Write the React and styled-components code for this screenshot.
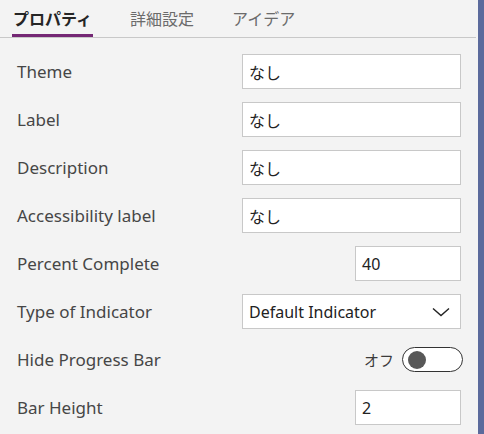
import React from 'react';
import styled, { createGlobalStyle } from 'styled-components';

const GlobalStyle = createGlobalStyle`
  html, body {
    margin: 0;
    padding: 0;
    background: #f3f3f3;
  }
  body {
    font-family: "Noto Sans", "Noto Sans CJK JP", sans-serif;
  }
`;

const Frame = styled.div`
  display: flex;
  width: 484px;
  height: 434px;
  overflow: hidden;
  background: #f3f3f3;
`;

const Panel = styled.div`
  width: 476px;
  padding-right: 2px;
  display: flex;
  flex-direction: column;
`;

const Edge = styled.div`
  width: 6px;
  background: #5b6a9c;
`;

const TabBar = styled.div`
  display: flex;
  height: 37px;
  padding-left: 12px;
  border-bottom: 1px solid #c8c8c8;
`;

const Tab = styled.div`
  position: relative;
  margin-right: 36px;
  padding: 6px 1px 0;
  font-size: 16px;
  font-weight: ${(p) => (p.$active ? 600 : 400)};
  color: ${(p) => (p.$active ? '#252525' : '#6b6b6b')};
  font-family: "Noto Sans CJK JP", sans-serif;
  &::after {
    content: '';
    display: ${(p) => (p.$active ? 'block' : 'none')};
    position: absolute;
    left: 0;
    right: 0;
    bottom: 0;
    height: 3px;
    background: #742774;
  }
`;

const List = styled.div`
  display: flex;
  flex-direction: column;
  gap: 13px;
  padding: 16px 15px 0 17px;
`;

const Row = styled.div`
  display: grid;
  grid-template-columns: 225px 1fr;
  align-items: center;
  height: 35px;
`;

const Label = styled.div`
  font-size: 17px;
  color: #464646;
`;

const Field = styled.div`
  display: flex;
  justify-content: flex-end;
  align-items: center;
  gap: 8px;
`;

const Input = styled.div`
  box-sizing: border-box;
  width: ${(p) => p.$width || '100%'};
  height: 35px;
  display: flex;
  align-items: center;
  justify-content: space-between;
  padding: 0 10px 0 6px;
  background: #fff;
  border: 1px solid #c8c8c8;
  font-size: 16px;
  color: #222;
  font-family: "Noto Sans", "Noto Sans CJK JP", sans-serif;
`;

const ToggleText = styled.span`
  font-size: 15px;
  color: #3b3b3b;
  font-family: "Noto Sans CJK JP", sans-serif;
`;

const Toggle = styled.div`
  box-sizing: border-box;
  width: 61px;
  height: 25px;
  margin-right: -2px;
  border: 1px solid #333;
  border-radius: 13px;
  background: #fff;
  display: flex;
  align-items: center;
  padding-left: 5px;
`;

const Knob = styled.div`
  width: 18px;
  height: 18px;
  border-radius: 50%;
  background: #585858;
`;

const textRows = ['Theme', 'Label', 'Description', 'Accessibility label'];

export default function App() {
  return (
    <Frame>
      <GlobalStyle />
      <Panel>
        <TabBar>
          <Tab $active>プロパティ</Tab>
          <Tab>詳細設定</Tab>
          <Tab>アイデア</Tab>
        </TabBar>
        <List>
          {textRows.map((name) => (
            <Row key={name}>
              <Label>{name}</Label>
              <Input>なし</Input>
            </Row>
          ))}
          <Row>
            <Label>Percent Complete</Label>
            <Field>
              <Input $width="106px">40</Input>
            </Field>
          </Row>
          <Row>
            <Label>Type of Indicator</Label>
            <Input>
              Default Indicator
              <svg width="18" height="10" viewBox="0 0 18 10">
                <path d="M1 1.5 L9 8.5 L17 1.5" fill="none" stroke="#222" strokeWidth="1.4" />
              </svg>
            </Input>
          </Row>
          <Row>
            <Label>Hide Progress Bar</Label>
            <Field>
              <ToggleText>オフ</ToggleText>
              <Toggle>
                <Knob />
              </Toggle>
            </Field>
          </Row>
          <Row>
            <Label>Bar Height</Label>
            <Field>
              <Input $width="106px">2</Input>
            </Field>
          </Row>
        </List>
      </Panel>
      <Edge />
    </Frame>
  );
}
